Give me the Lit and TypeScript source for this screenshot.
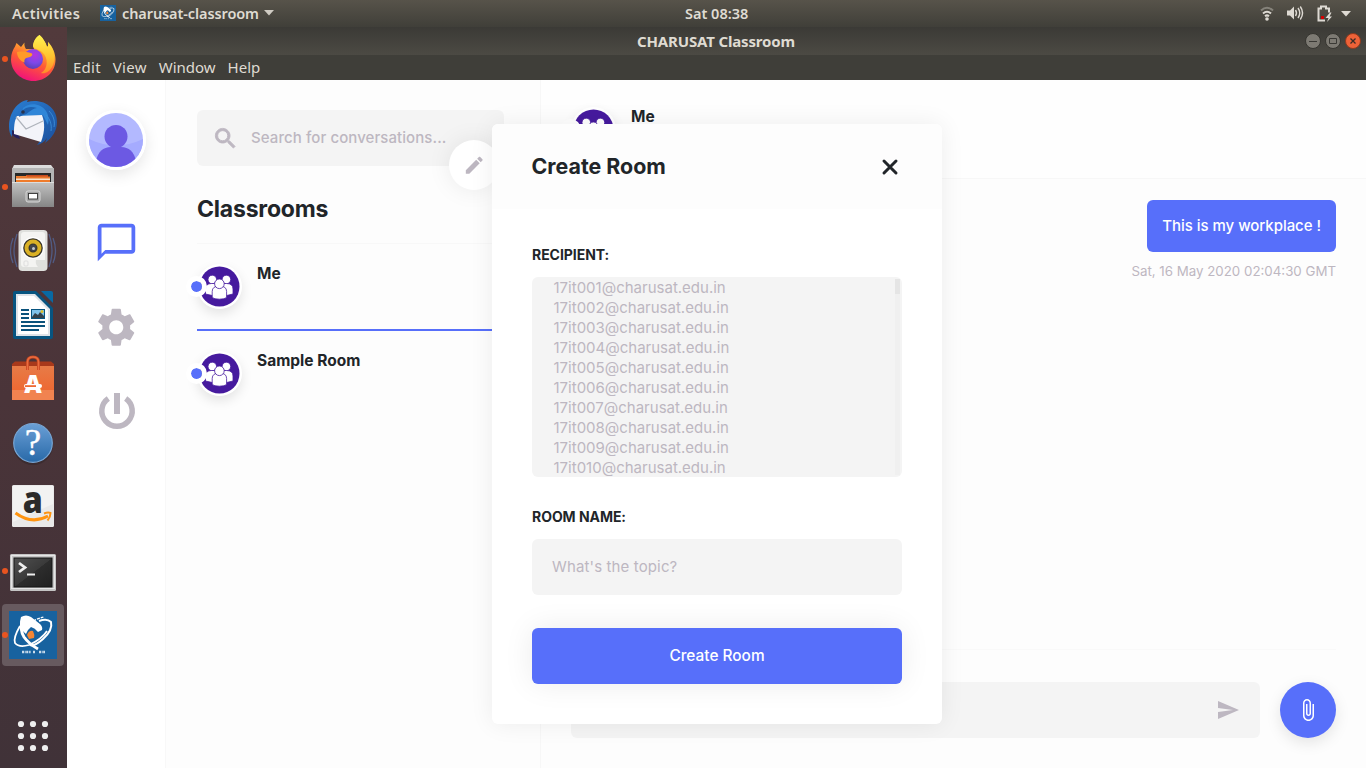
import { LitElement, html, css, svg } from "lit";
import { customElement, property } from "lit/decorators.js";

const firefox = svg`
  <defs>
    <linearGradient id="fa" x1=".75" y1="0" x2=".35" y2="1"><stop offset="0" stop-color="#fff44f"/><stop offset=".3" stop-color="#ffb02e"/><stop offset=".6" stop-color="#ff5a36"/><stop offset="1" stop-color="#f0107c"/></linearGradient>
    <radialGradient id="fb" cx=".6" cy=".3" r=".8"><stop offset="0" stop-color="#b833e1"/><stop offset=".5" stop-color="#7d48e8"/><stop offset="1" stop-color="#4f3fa8"/></radialGradient>
    <linearGradient id="fc" x1="0" y1="0" x2="0" y2="1"><stop offset="0" stop-color="#fff44f"/><stop offset=".6" stop-color="#ffc02f"/><stop offset="1" stop-color="#ff8a2a"/></linearGradient>
  </defs>
  <path fill="url(#fa)" d="M30.500 0C34 3 37 8 38 12c2-1 1-4 1-5 5 5 7.500 12 7.500 17.500C46.500 37 36.500 46 24.500 46S2 36.500 2 24.500c0-6 2-10 4-13L7.500 8l4.500 4 3.500-4.500c-.5 3 .5 5 1.500 6.500h8C23 9 26 3 30.500 0z"/>
  <path fill="url(#fc)" d="M30.500 0C34 3 37 8 38 12c2-1 1-4 1-5 6 7 8 15 5 23-3 7-8 9-12 8 7-4 8-15 1-21-3-3-9-3-9-6 0-4 3-9 6.500-11z"/>
  <circle cx="24" cy="24" r="10" fill="url(#fb)"/>
  <path fill="#ff9a28" d="M8 17c5-1 9-.5 15 1.500 1 2-1 3.500-4 4-3 .6-4 2-3.500 5C11 26 8 22 8 17z"/>`;

const thunderbird = svg`
  <defs><linearGradient id="ta" x1="0" y1="0" x2="1" y2="1"><stop offset="0" stop-color="#2a7fd4"/><stop offset="1" stop-color="#1b4f9c"/></linearGradient></defs>
  <path fill="#25215f" d="M2 31c0 5 4 8 9 9l-2-6z"/>
  <path fill="url(#ta)" d="M0 28C0 13 9 2 19 1c-1 1-1 2-1 2C35-1 48 9 48 23c0 9-5 16-12 21l2-5c-3 4-6 6-10 7l4-5L3 31l0 7C1 35 0 32 0 28z"/>
  <path fill="#2f86d8" d="M14 9C20 3 32 4 37 12c3 5 3 9 2 14l-5-10-16 1-6 1z"/>
  <path fill="#f3f4f9" d="M8 17l25-1c3 8 3 16-1 27L5 35c0-7 0-12 3-18z"/>
  <path d="M7 18l10 12 17-8" fill="none" stroke="#aeb3bb" stroke-width="1.200"/>
  <path fill="#1f62b1" d="M10 18c2-8 9-12 18-9-7 1-8 6-14 7z"/><circle cx="14" cy="13" r="1.800" fill="#27344f"/>
  <path d="M37 16c4 4 6 9 5 16M40 12c5 5 6 11 5 16" fill="none" stroke="#3a8ad6"/>`;

const files = svg`
  <defs><linearGradient id="ga" x1="0" y1="0" x2="0" y2="1"><stop offset="0" stop-color="#c2c2c2"/><stop offset="1" stop-color="#858585"/></linearGradient></defs>
  <path d="M5 2h37l3 4H3z" fill="#dcdcdc"/><path d="M3 5h42v16H3z" fill="#b5b5b5"/>
  <path d="M6 10h36v10H6z" fill="#282828"/>
  <path d="M17 12h22v4H17z" fill="#c64a1e"/><path d="M7 13h11v4H7z" fill="#f58b3a"/><path d="M7 15h34v5H7z" fill="#f9e5ce"/><path d="M7 13.500h34v2H7z" fill="#e8762c"/><path d="M7 17h34v3H7z" fill="#ef7b2b"/>
  <path d="M3 19h42v25H3z" fill="url(#ga)"/><path d="M3 19.500h42" stroke="#ddd"/>
  <rect x="17" y="28" width="14" height="11" rx="2" fill="#a5a5a5" stroke="#d8d8d8"/><rect x="19.500" y="30.500" width="9" height="5.500" fill="#fff" stroke="#333" stroke-width=".9"/>`;

const rhythmbox = svg`
  <g fill="none" stroke="#53689c" stroke-width="1.300" opacity=".75"><path d="M8 7q-6 16 0 33M4 11q-5 13 0 25M40 7q6 16 0 33M44 11q5 13 0 25"/></g>
  <rect x="9.500" y="3" width="29" height="41" rx="4" fill="#dfe0dd"/><rect x="12" y="5" width="24" height="35" rx="3" fill="#f4f4f2"/>
  <circle cx="24" cy="21" r="11" fill="#fff"/><circle cx="24" cy="21" r="9.800" fill="#38352c"/><circle cx="24" cy="21" r="6.500" fill="none" stroke="#dab126" stroke-width="4"/><circle cx="24" cy="21" r="3.400" fill="#42454c"/><circle cx="24.500" cy="21.500" r="1.500" fill="#c4c9ce"/>
  <rect x="15" y="34" width="4" height="5" rx="1" fill="none" stroke="#ddd"/><path d="M27 33h9v7h-7q-3-3-2-7z" fill="#dfe0dd"/>`;

const writer = svg`
  <path fill="#075480" d="M6 0h21l17 17v29q0 2-2 2H6q-2 0-2-2V2q0-2 2-2z"/><path fill="#0869a3" d="M32 0h10q2 0 2 2v10z"/>
  <path fill="#dfe3e8" d="M7 3h19l15 15v27H7z"/><path fill="#fff" d="M9 5h16l14 14v24H9z"/>
  <path d="M12 19h8m-8 4h8m-8 4h8m-8 4h24m-24 4h24m-24 4h18" stroke="#0b527b" stroke-width="2"/>
  <rect x="22" y="18" width="14" height="10" fill="#075480"/><rect x="23" y="19" width="12" height="8" fill="#7fc2ea"/><path d="M23 26l3-4 3 2 2-3 4 4v2H23z" fill="#34414a"/><circle cx="33" cy="20.500" r="1.500" fill="#e0bd29"/>`;

const software = svg`
  <defs><linearGradient id="sa" x1="0" y1="0" x2="0" y2="1"><stop offset="0" stop-color="#e77b47"/><stop offset="1" stop-color="#f0622b"/></linearGradient></defs>
  <path d="M3 9l3-2.500h36L45 9v6H3z" fill="#a8391b"/><path d="M3 11h42v34H3z" fill="url(#sa)"/><path d="M3 35h42v10H3z" fill="#f18350"/>
  <path d="M18.500 15V7q0-5 5.500-5t5.500 5v8" fill="none" stroke="#c7461f" stroke-width="3"/><path d="M18.500 15V7q0-5 5.500-5t5.500 5v8" fill="none" stroke="#e96c40" stroke-width="1.500"/>
  <text x="24" y="38" text-anchor="middle" font-family="Open Sans, sans-serif" font-weight="800" font-size="24" fill="#fff">A</text>
  <rect x="15" y="29" width="18" height="4" rx="2" fill="#fff"/><rect x="16" y="30.200" width="11" height="1.800" fill="#ef6a33"/>`;

const help = svg`
  <defs><linearGradient id="ha" x1="0" y1="0" x2="0" y2="1"><stop offset="0" stop-color="#6a9fd6"/><stop offset="1" stop-color="#2869a8"/></linearGradient></defs>
  <ellipse cx="24" cy="26" rx="20" ry="20" fill="#2b2024" opacity=".4"/>
  <circle cx="24" cy="24" r="19.300" fill="url(#ha)" stroke="#78a5d3" stroke-width="1.200"/>
  <text x="24" y="36" text-anchor="middle" font-family="Liberation Serif, serif" font-size="37" fill="#fff" stroke="#fff" stroke-width=".4">?</text>`;

const amazon = svg`
  <rect x="3" y="2" width="42" height="42" rx="1.500" fill="#e9e9e9"/><path d="M4 3h40v18L4 39z" fill="#f2f2f2"/>
  <text x="23.800" y="30" text-anchor="middle" font-family="Open Sans, sans-serif" font-weight="800" font-size="37" textLength="20" lengthAdjust="spacingAndGlyphs" fill="#2a2a2a">a</text>
  <path d="M6.500 30Q23 42 39 33" fill="none" stroke="#ff9410" stroke-width="3"/><path d="M35 30.500q4-1.500 6.500-.5 0 4-3 7.500" fill="none" stroke="#ff9410" stroke-width="2"/>`;

const terminal = svg`
  <defs><linearGradient id="xa" x1="0" y1="0" x2="1" y2="1"><stop offset="0" stop-color="#505050"/><stop offset=".5" stop-color="#3a3a3a"/><stop offset=".51" stop-color="#2d2d2d"/><stop offset="1" stop-color="#202020"/></linearGradient></defs>
  <rect x="1" y="7" width="46" height="37" rx="1.500" fill="#c4c4c4"/><rect x="2.500" y="8.500" width="43" height="33" fill="none" stroke="#e6e6e6"/>
  <rect x="5" y="11" width="38" height="29" fill="url(#xa)" stroke="#151515"/>
  <path d="M10 16l6 4.500-6 4.500" fill="none" stroke="#eee" stroke-width="2.800"/><path d="M18 27.500h8" stroke="#eee" stroke-width="2"/>`;

const charusat = svg`
  <rect width="48" height="48" fill="#17629f"/>
  <path d="M12 6q5-3 10 0l9 7q3 3 2 6l-4 2q-3-4-7-5-4 3-5 7-5-4-6-9 0-5 1-8z" fill="#fff"/>
  <path d="M18 24q2-5 6-4 2 4 1 7l-5 1z" fill="#f58634"/>
  <g fill="none" stroke="#fff">
    <path d="M11 15Q4 27 6 32q4 5 14 2 13-6 18-14" stroke-width="1.800"/>
    <path d="M13 10q-2 10 2 16 5 7 14 12" stroke-width="3"/>
    <path d="M30 10q8-3 12 1 2 8-8 17-9 8-13 6" stroke-width="2"/>
    <path d="M24 10q6-3 11-4" stroke-width="1.300" stroke-dasharray="3 1"/>
  </g>
  <path d="M13 41h9m2 0h2m4 0h6" stroke="#c9dcec" stroke-width="2.600" stroke-dasharray="2 .7 1 .5"/>`;

const apps = svg`<g fill="#eee">${[0, 1, 2].map((r) => [0, 1, 2].map((c) => svg`<circle cx=${12 + c * 12} cy=${12 + r * 12} r="3.100"/>`))}</g>`;

const dock = [
  { icon: firefox, on: true }, { icon: thunderbird }, { icon: files, on: true }, { icon: rhythmbox }, { icon: writer },
  { icon: software }, { icon: help }, { icon: amazon }, { icon: terminal, on: true }, { icon: charusat, on: true, active: true },
];

const paths = {
  chat: "M20 2H4c-1.100 0-2 .9-2 2v18l4-4h14c1.100 0 2-.9 2-2V4c0-1.100-.9-2-2-2zm0 14H6l-2 2V4h16v12z",
  gear: "M19.430 12.980c.04-.32.070-.64.070-.98s-.03-.66-.07-.98l2.110-1.650c.19-.15.240-.42.120-.64l-2-3.460c-.12-.22-.39-.3-.61-.22l-2.490 1c-.52-.4-1.080-.73-1.690-.98l-.38-2.650C14.460 2.180 14.250 2 14 2h-4c-.25 0-.46.180-.49.420l-.38 2.650c-.61.250-1.170.590-1.690.98l-2.490-1c-.23-.09-.49 0-.61.220l-2 3.460c-.13.220-.07.490.120.640l2.110 1.650c-.04.320-.07.650-.07.980s.03.660.070.980l-2.110 1.650c-.19.150-.24.420-.12.640l2 3.460c.12.220.390.300.610.220l2.490-1c.52.400 1.080.730 1.690.980l.38 2.650c.03.240.240.420.490.420h4c.25 0 .46-.18.490-.42l.38-2.650c.61-.25 1.170-.59 1.690-.98l2.490 1c.23.090.490 0 .61-.22l2-3.460c.12-.22.070-.49-.12-.64l-2.110-1.650zM12 15.800c-2.100 0-3.800-1.700-3.800-3.800s1.700-3.800 3.800-3.800 3.800 1.700 3.800 3.800-1.700 3.800-3.800 3.800z",
  search: "M15.500 14h-.79l-.28-.27C15.410 12.590 16 11.110 16 9.500 16 5.910 13.090 3 9.500 3S3 5.910 3 9.500 5.910 16 9.500 16c1.610 0 3.090-.59 4.230-1.570l.27.280v.79l5 4.990L20.490 19l-4.990-5zm-6 0C7.010 14 5 11.990 5 9.500S7.010 5 9.500 5 14 7.010 14 9.500 11.990 14 9.500 14z",
  edit: "M3 17.250V21h3.750L17.810 9.940l-3.750-3.750L3 17.250zM20.710 7.040c.39-.39.390-1.020 0-1.410l-2.340-2.340c-.39-.39-1.020-.39-1.410 0l-1.830 1.830 3.750 3.750 1.830-1.830z",
  send: "M2.010 21L23 12 2.010 3 2 10l15 2-15 2z",
  clip: "M16.500 6v11.500c0 2.210-1.790 4-4 4s-4-1.790-4-4V5c0-1.380 1.120-2.500 2.500-2.500s2.500 1.120 2.500 2.500v10.500c0 .55-.45 1-1 1s-1-.45-1-1V6H10v9.500c0 1.380 1.120 2.500 2.500 2.500s2.500-1.120 2.500-2.500V5c0-2.210-1.790-4-4-4S7 2.790 7 5v12.500c0 3.040 2.460 5.500 5.500 5.500s5.500-2.460 5.500-5.500V6h-1.500z",
};
const glyph = (d: string, size: number) => html`<svg width=${size} height=${size} viewBox="0 0 24 24" fill="currentColor"><path d=${d} /></svg>`;

@customElement("room-avatar")
export class RoomAvatar extends LitElement {
  static styles = css`
    :host { display: block; position: relative; width: 45px; height: 45px; flex: none; }
    .pic { display: block; border-radius: 50%; box-shadow: 0 5px 12px rgba(0, 0, 0, 0.1); }
    .dot { position: absolute; left: -11.500px; top: 12px; width: 11px; height: 11px; border: 5px solid #fff; border-radius: 50%; background: #576ffa; background-clip: padding-box; }
  `;
  render() {
    return html`
      <svg class="pic" width="45" height="45" viewBox="0 0 45 45">
        <circle cx="22.500" cy="22.500" r="22.500" fill="#fff" /><circle cx="22.500" cy="22.500" r="20" fill="#461a9e" />
        <g fill="#fff" stroke="#461a9e" stroke-width=".8">
          <circle cx="15.300" cy="15.500" r="4.300" /><circle cx="29.400" cy="15.500" r="4.300" />
          <path d="M8.500 30v-5q0-5.500 6-5.500h15q6.500 0 6.500 5.500v5q-6 2-13.500 2T8.500 30z" />
          <path d="M15.200 33.500v-6q0-5.500 7.200-5.500t7.200 5.500v6q-2 1.700-7.200 1.700t-7.200-1.700z" /><circle cx="22.400" cy="19.800" r="4.800" />
        </g>
      </svg>
      <span class="dot"></span>`;
  }
}

@customElement("room-item")
export class RoomItem extends LitElement {
  @property() name = "";
  static styles = css`
    :host { display: flex; gap: 15px; height: 85px; padding-top: 20px; box-sizing: border-box; }
    .name { font: 700 15.5px/20px Inter, sans-serif; color: #212529; white-space: nowrap; }
  `;
  render() {
    return html`<room-avatar></room-avatar><div class="name">${this.name}</div>`;
  }
}

@customElement("app-root")
export class AppRoot extends LitElement {
  static styles = css`
    :host { display: block; width: 1366px; height: 768px; overflow: hidden; font-family: Inter, "Liberation Sans", sans-serif; color: #212529; background: #fdfdfd; }
    * { box-sizing: border-box; }
    svg { display: block; flex: none; overflow: visible; }
    .screen { display: grid; grid-template: 27px 741px / 67px 1299px; }
    .top { grid-column: 1 / 3; display: grid; grid-template-columns: 685px 1fr auto; align-items: center; background: linear-gradient(#57534a, #403f39); color: #dfdbd2; font: 600 14.500px/26px "Noto Sans", sans-serif; white-space: nowrap; padding-bottom: 1px; }
    .left { display: flex; align-items: center; padding-left: 12px; }
    .act { width: 88px; letter-spacing: 0.35px; }
    .appname { width: 137px; margin: 0 5px 0 6px; letter-spacing: -0.1px; }
    .status { display: flex; align-items: center; padding-right: 15px; }
    .dock { display: flex; flex-direction: column; align-items: center; background: linear-gradient(#523a3c, #4a3439 50%, #403238); }
    .slot { width: 67px; height: 64px; display: flex; align-items: center; position: relative; padding-left: 2px; }
    .tile { width: 62px; height: 62px; display: grid; place-items: center; border-radius: 4px; }
    .tile.active { background: #675a5f; }
    .run { position: absolute; left: 2px; top: 29px; width: 6px; height: 6px; border-radius: 50%; background: #e95420; }
    .grid { margin-top: 45px; margin-right: 1px; }
    .win { display: grid; grid-template-rows: 28px 25px 688px; }
    .title { display: grid; grid-template-columns: 1fr auto; align-items: center; background: linear-gradient(#3b3a36, #4c4a44); color: #dfdbd2; font: 700 15px/26px "Noto Sans", sans-serif; letter-spacing: -0.16px; padding-right: 5px; }
    .title .name { text-align: center; padding-left: 60px; padding-bottom: 1px; }
    .btns { display: flex; gap: 4px; }
    .menu { display: flex; background: #3f3e39; color: #dfdbd2; font: 15px/25px "Noto Sans", sans-serif; padding-left: 6px; gap: 12px; }
    .menu span:first-child { letter-spacing: 0.250px; }
    .menu span:nth-child(2) { letter-spacing: 0.250px; }
    .app { position: relative; display: grid; grid-template-columns: 98px 376px 825px; overflow: hidden; }
    .nav { background: #fff; display: flex; flex-direction: column; align-items: center; padding-top: 30px; }
    .me { width: 60px; height: 60px; border-radius: 50%; border: 3px solid #fff; box-shadow: 0 5px 15px rgba(0, 0, 0, 0.1); overflow: hidden; }
    .chat { color: #576ffa; margin-top: 50px; }
    .gear, .power { color: #bdb7c1; }
    .gear { margin-top: 40px; }
    .power { margin: 42px 0 0 1px; }
    .side { padding: 30px 36px 0 31px; border-left: 1px solid #f8f8f8; border-right: 1px solid #f7f7f7; position: relative; background: #fdfdfd; }
    .search { height: 56px; width: 307px; border-radius: 6px; background: #f4f4f4; display: flex; align-items: center; gap: 12px; padding-left: 15px; color: #bdb7c1; font-size: 15px; font-weight: 500; letter-spacing: 0.080px; }
    .search svg { stroke: currentColor; stroke-width: 0.8; }
    .search span { margin-bottom: 2px; }
    .fab { position: absolute; left: 283px; top: 60px; width: 50px; height: 50px; border-radius: 50%; background: #fff; color: #bdb7c1; display: grid; place-items: center; box-shadow: 0 0 25px rgba(0, 0, 0, 0.08); }
    .side h2 { margin: 27px 0 0; height: 51px; font: 700 23px/32px Inter, sans-serif; letter-spacing: -0.2px; border-bottom: 1px solid #f8f8f8; }
    .rooms { display: flex; flex-direction: column; width: 307px; }
    .rule { height: 2px; background: #576ffa; }
    .main { display: grid; grid-template-rows: 99px 471px 118px; background: #fdfdfd; }
    .head { background: #fefefe; border-bottom: 1px solid #f7f7f7; padding: 27px 30px 0 30px; display: flex; gap: 15px; }
    .head .name { font-size: 15.500px; font-weight: 700; line-height: 20px; }
    .msgs { margin: 0 30px; padding-top: 21px; display: flex; flex-direction: column; align-items: flex-end; border-bottom: 1px solid #f9f9f9; }
    .bubble { background: #576ffa; color: #fff; border-radius: 6px; height: 52px; padding: 0 15px; font-size: 15px; font-weight: 500; line-height: 52px; letter-spacing: -0.040px; }
    .time { margin-top: 10px; color: #bdb7c1; font-size: 13.300px; line-height: 18px; }
    .foot { display: flex; gap: 20px; padding: 32px 30px 0; }
    .compose { flex: 1; height: 56px; border-radius: 6px; background: #f4f4f4; color: #bdb7c1; display: flex; justify-content: flex-end; align-items: center; padding-right: 20px; }
    .attach { width: 56px; height: 56px; border-radius: 50%; background: #576ffa; color: #fff; display: grid; place-items: center; box-shadow: 0 5px 15px rgba(0, 0, 0, 0.1); }
    .modal { position: absolute; left: 425px; top: 44px; width: 450px; height: 600px; border-radius: 6px; background: #fff; box-shadow: 0 0 25px rgba(0, 0, 0, 0.07); overflow: hidden; }
    .mhead { height: 85px; background: #fdfdfd; display: flex; align-items: center; justify-content: space-between; padding: 0 43px 0 39.500px; font-size: 21.400px; font-weight: 700; line-height: 27px; }
    .mhead span { margin-bottom: 1px; }
    .form { padding: 36px 40px 0; display: flex; flex-direction: column; }
    .label { font-size: 14px; font-weight: 700; line-height: 20px; letter-spacing: -0.050px; }
    .list { height: 200px; margin: 12px 0 30px; border-radius: 6px; background: #f4f4f4; display: grid; grid-template-columns: 1fr 5px; padding: 1px 2px 2px 21.500px; color: #bdb7c1; font-size: 15px; line-height: 20px; }
    .opts { height: 197px; }
    .track { background: #f0f0f0; height: 196px; margin-top: 1px; }
    .thumb { height: 15px; background: #e5e5e5; }
    .field { height: 56px; margin: 12px 0 33px; padding-left: 20px; border-radius: 6px; background: #f4f4f4; color: #bdb7c1; font-size: 15px; line-height: 55px; letter-spacing: 0.130px; }
    .submit { height: 56px; border-radius: 6px; background: #576ffa; color: #fff; text-align: center; font-size: 15.400px; font-weight: 500; line-height: 55px; box-shadow: 0 0 30px rgba(0, 0, 0, 0.08); }
  `;

  render() {
    return html`
      <div class="screen">
        <header class="top">
          <div class="left">
            <span class="act">Activities</span>
            <svg width="16" height="16" viewBox="0 0 48 48">${charusat}</svg>
            <span class="appname">charusat-classroom</span>
            <svg width="10" height="6"><path d="M0 0h10L5 5.500z" fill="#cfcbc3" /></svg>
          </div>
          <span>Sat 08:38</span>
          <div class="status">
            <svg width="91" height="20" viewBox="0 0 91 20" fill="none" stroke="#dedad3">
              <g stroke-width="2"><path d="M1 7.500q6-5.500 12 0" stroke="#85827a" /><path d="M3 10.500q4-3.500 8 0M5 13.200q2-1.600 4 0" /></g><circle cx="7" cy="16" r="1.800" fill="#dedad3" stroke="none" />
              <path d="M27 7.500h3l4-4v13l-4-4h-3z" fill="#dedad3" stroke="none" /><path d="M35.500 7q2 3 0 6M38 5q3.500 5 0 10M40.300 3.500q4.500 6.500 0 13" stroke-width="1.400" />
              <path d="M65 17.500h-6.500V5.500h2.500V3.500h5v2h3v4" stroke-width="2" /><path d="M61 13h3v3h-3z" fill="#d40000" stroke="none" /><path d="M70 9.500l-4.500 5.500h3l-1.500 4 5-5.500h-2.500l2-4z" fill="#dedad3" stroke="none" />
              <path d="M81 8h10l-5 5.500z" fill="#dedad3" stroke="none" />
            </svg>
          </div>
        </header>
        <aside class="dock">
          ${dock.map((d) => html`<div class="slot"><div class="tile ${d.active ? "active" : ""}"><svg width="48" height="48" viewBox="0 0 48 48">${d.icon}</svg></div>${d.on ? html`<i class="run"></i>` : ""}</div>`)}
          <svg class="grid" width="48" height="48" viewBox="0 0 48 48">${apps}</svg>
        </aside>
        <section class="win">
          <div class="title">
            <span class="name">CHARUSAT Classroom</span>
            <div class="btns">
              <svg width="16" height="16"><circle cx="8" cy="8" r="7.500" fill="#7d7a73" stroke="#363530" /><path d="M4 8.500h8" stroke="#3a3935" /></svg>
              <svg width="16" height="16"><circle cx="8" cy="8" r="7.500" fill="#7d7a73" stroke="#363530" /><path d="M4.500 5.500h7v5h-7z" fill="none" stroke="#3a3935" /></svg>
              <svg width="16" height="16"><circle cx="8" cy="8" r="7.500" fill="#ee6238" stroke="#8f3a1e" /><path d="M5.500 5.500l5 5m0-5l-5 5" stroke="#3a2c26" stroke-width="1.300" /></svg>
            </div>
          </div>
          <div class="menu"><span>Edit</span><span>View</span><span>Window</span><span>Help</span></div>
          <div class="app">
            <nav class="nav">
              <div class="me"><svg width="54" height="54" viewBox="0 0 54 54"><path fill="#b3b9ff" d="M0 0h54v54H0z" /><path fill="#a5abff" d="M0 26q27 13 54 0v28H0z" /><circle cx="27" cy="23.500" r="11.500" fill="#6c59e3" /><path fill="#6c59e3" d="M7 48Q10 34 22 34h10q12 0 15 14v6H7z" /></svg></div>
              <div class="chat">${glyph(paths.chat, 45)}</div>
              <div class="gear">${glyph(paths.gear, 44.5)}</div>
              <svg class="power" width="38" height="38" viewBox="-19 -19 38 38" fill="none" stroke="currentColor" stroke-width="5.500"><path d="M-8.700-12.500a15.200 15.200 0 1 0 17.400 0" /><path d="M0-18V3" stroke-width="6" /></svg>
            </nav>
            <aside class="side">
              <div class="search">${glyph(paths.search, 27)}<span>Search for conversations...</span></div>
              <h2>Classrooms</h2>
              <div class="rooms">
                <room-item name="Me"></room-item>
                <div class="rule"></div>
                <room-item name="Sample Room"></room-item>
              </div>
              <div class="fab">${glyph(paths.edit, 22.5)}</div>
            </aside>
            <main class="main">
              <div class="head"><room-avatar></room-avatar><span class="name">Me</span></div>
              <div class="msgs"><div class="bubble">This is my workplace !</div><div class="time">Sat, 16 May 2020 02:04:30 GMT</div></div>
              <div class="foot"><div class="compose">${glyph(paths.send, 24)}</div><div class="attach">${glyph(paths.clip, 24)}</div></div>
            </main>
            <div class="modal">
              <div class="mhead"><span>Create Room</span><svg width="18" height="18" viewBox="0 0 18 18"><path d="M3 3l12 12M15 3L3 15" stroke="#212529" stroke-width="3" stroke-linecap="round" /></svg></div>
              <div class="form">
                <div class="label">RECIPIENT:</div>
                <div class="list">
                  <div class="opts">${Array.from({ length: 10 }, (_, i) => html`<div>17it0${String(i + 1).padStart(2, "0")}@charusat.edu.in</div>`)}</div>
                  <div class="track"><div class="thumb"></div></div>
                </div>
                <div class="label">ROOM NAME:</div>
                <div class="field">What's the topic?</div>
                <div class="submit">Create Room</div>
              </div>
            </div>
          </div>
        </section>
      </div>`;
  }
}
